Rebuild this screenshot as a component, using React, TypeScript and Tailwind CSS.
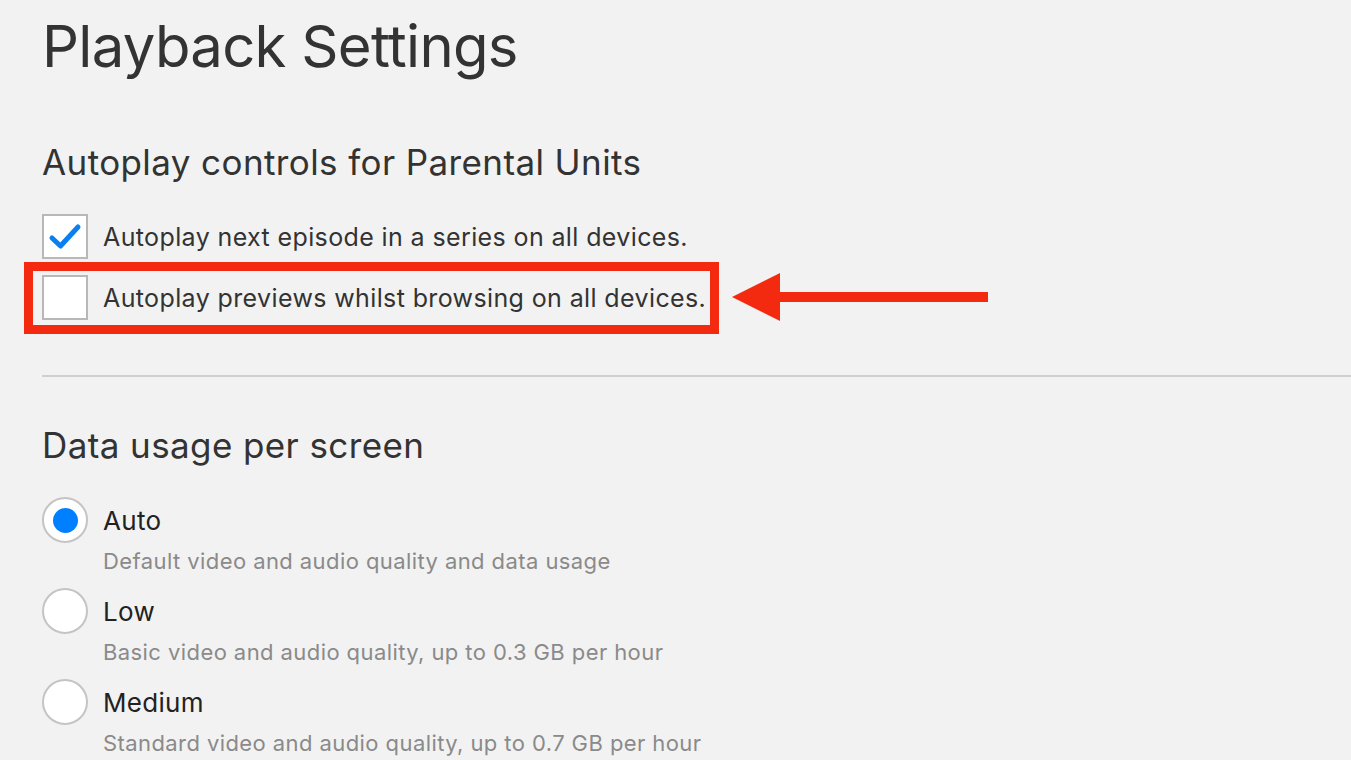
import React from "react";

function Checkbox({ checked }: { checked: boolean }) {
  return (
    <div className="w-[46px] h-[45px] shrink-0 bg-white border-2 border-[#b8b8b8] flex items-center justify-center">
      {checked && (
        <svg width="34" height="30" viewBox="0 0 34 30">
          <path d="M4 16 L12.5 24 L30 5" fill="none" stroke="#0a7ff0" strokeWidth="5" strokeLinecap="round" strokeLinejoin="round" />
        </svg>
      )}
    </div>
  );
}

function Radio({ checked }: { checked: boolean }) {
  return (
    <div className="w-[46px] h-[46px] shrink-0 rounded-full bg-white border-2 border-[#c4c4c4] flex items-center justify-center">
      {checked && <div className="w-[25px] h-[25px] rounded-full bg-[#0080ff]" />}
    </div>
  );
}

function Option({ label, desc, checked }: { label: string; desc: string; checked: boolean }) {
  return (
    <div className="flex gap-[15px]">
      <Radio checked={checked} />
      <div className="flex flex-col">
        <div className="h-[46px] leading-[48px] text-[26px] tracking-[0.3px] text-[#222]">{label}</div>
        <div className="h-[45px] leading-[36px] text-[22px] tracking-[0.42px] text-[#8a8a8a]">{desc}</div>
      </div>
    </div>
  );
}

export default function App() {
  return (
    <div className="w-[1351px] h-[760px] overflow-hidden bg-[#f2f2f2] text-[#333] font-['Inter',sans-serif]">
      <div className="pl-[42px]">
        <h1 className="h-[92px] leading-[92px] text-[58px] tracking-[-0.7px] text-[#333]">Playback Settings</h1>
        <h2 className="mt-[45px] h-[50px] leading-[50px] text-[35px] tracking-[0.4px] text-[#333]">Autoplay controls for Parental Units</h2>
        <div className="mt-[27px] flex items-center gap-[15px] h-[45px]">
          <Checkbox checked />
          <span className="pt-[3px] text-[25px] tracking-[0.38px] text-[#333]">Autoplay next episode in a series on all devices.</span>
        </div>
        <div className="mt-[16px] relative flex items-center gap-[15px] h-[45px]">
          <Checkbox checked={false} />
          <span className="pt-[2px] text-[25px] tracking-[0.38px] text-[#333]">Autoplay previews whilst browsing on all devices.</span>
          <div className="absolute left-[-18px] top-[-13px] w-[695px] h-[72px] border-[9px] border-[#f42a10]" />
          <svg className="absolute left-[688px] top-[-3px]" width="260" height="50" viewBox="0 0 260 50">
            <polygon points="2,25 50,1 50,49" fill="#f42a10" />
            <rect x="48" y="20" width="210" height="10" fill="#f42a10" />
          </svg>
        </div>
        <div className="mt-[55px] h-[2px] bg-[#d0d0d0]" />
        <h3 className="mt-[43px] h-[50px] leading-[50px] text-[35px] tracking-[0.4px] text-[#333]">Data usage per screen</h3>
        <div className="mt-[27px] flex flex-col">
          <Option checked label="Auto" desc="Default video and audio quality and data usage" />
          <Option checked={false} label="Low" desc="Basic video and audio quality, up to 0.3 GB per hour" />
          <Option checked={false} label="Medium" desc="Standard video and audio quality, up to 0.7 GB per hour" />
        </div>
      </div>
    </div>
  );
}
